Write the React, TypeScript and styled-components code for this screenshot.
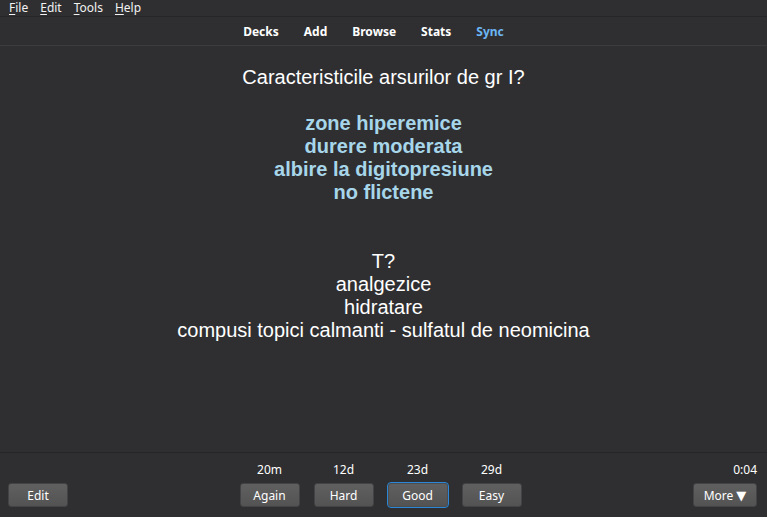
import React from "react";
import styled, { createGlobalStyle } from "styled-components";

const GlobalStyle = createGlobalStyle`
  html, body {
    margin: 0;
    padding: 0;
    background: #2f2f31;
  }
  #root {
    height: 100vh;
  }
`;

const Window = styled.div`
  height: 100%;
  display: flex;
  flex-direction: column;
  background: #2f2f31;
  color: #ffffff;
  font-family: "Noto Sans", "Open Sans", sans-serif;
  overflow: hidden;
`;

const MenuBar = styled.div`
  height: 16px;
  display: flex;
  align-items: center;
  gap: 12px;
  padding-left: 9px;
  font-size: 12px;
  border-bottom: 1px solid #262628;
`;

const MenuItem = styled.span`
  line-height: 16px;
  color: #f2f2f2;
`;

const Mnemonic = styled.span`
  text-decoration: underline;
  text-underline-offset: 2px;
`;

const Toolbar = styled.div`
  height: 28px;
  display: flex;
  align-items: center;
  justify-content: center;
  gap: 25px;
  padding-right: 20px;
  border-bottom: 1px solid #3c3c3e;
`;

const ToolLink = styled.span<{ $active?: boolean }>`
  font-size: 12px;
  font-weight: bold;
  color: ${(p) => (p.$active ? "#6cb6f5" : "#ffffff")};
`;

const Card = styled.div`
  flex: 1;
  padding-top: 20px;
  text-align: center;
  font-family: "Liberation Sans", Arial, sans-serif;
  font-size: 20px;
  line-height: 23px;
  color: #ffffff;
`;

const Answer = styled.div`
  font-weight: bold;
  color: #a7d6ea;
`;

const BottomBar = styled.div`
  display: grid;
  grid-template-columns: 1fr auto 1fr;
  align-items: end;
  padding: 10px 10px 10px 8px;
  border-top: 1px solid #262628;
`;

const Side = styled.div<{ $right?: boolean }>`
  display: flex;
  flex-direction: column;
  align-items: ${(p) => (p.$right ? "flex-end" : "flex-start")};
  gap: 6px;
`;

const Ease = styled.div`
  display: flex;
  margin-left: -4px;
`;

const EaseCol = styled.div`
  width: 74px;
  display: flex;
  flex-direction: column;
  align-items: center;
  gap: 6px;
`;

const Due = styled.span`
  font-size: 12px;
  line-height: 14px;
  color: #ffffff;
`;

const Button = styled.button<{ $focused?: boolean; $wide?: boolean }>`
  width: ${(p) => (p.$wide ? "64px" : "60px")};
  height: 24px;
  padding: 0;
  border: 1px solid ${(p) => (p.$focused ? "#4d4d4f" : "#434345")};
  outline: ${(p) => (p.$focused ? "1px solid #2b88d8" : "none")};
  border-radius: 3px;
  background: linear-gradient(#606060, #535353);
  color: #ffffff;
  font-family: "Noto Sans", "Open Sans", sans-serif;
  font-size: 12px;
`;

const Arrow = styled.span`
  font-family: "DejaVu Sans", sans-serif;
  font-size: 13px;
  margin-left: 3px;
`;

const answers = [
  { label: "Again", due: "20m" },
  { label: "Hard", due: "12d" },
  { label: "Good", due: "23d", focused: true },
  { label: "Easy", due: "29d" },
];

export default function App() {
  return (
    <Window>
      <GlobalStyle />
      <MenuBar>
        <MenuItem><Mnemonic>F</Mnemonic>ile</MenuItem>
        <MenuItem><Mnemonic>E</Mnemonic>dit</MenuItem>
        <MenuItem><Mnemonic>T</Mnemonic>ools</MenuItem>
        <MenuItem><Mnemonic>H</Mnemonic>elp</MenuItem>
      </MenuBar>
      <Toolbar>
        <ToolLink>Decks</ToolLink>
        <ToolLink>Add</ToolLink>
        <ToolLink>Browse</ToolLink>
        <ToolLink>Stats</ToolLink>
        <ToolLink $active>Sync</ToolLink>
      </Toolbar>
      <Card>
        <div>Caracteristicile arsurilor de gr I?</div>
        <br />
        <Answer>
          zone hiperemice
          <br />
          durere moderata
          <br />
          albire la digitopresiune
          <br />
          no flictene
        </Answer>
        <br />
        <br />
        <div>
          T?
          <br />
          analgezice
          <br />
          hidratare
          <br />
          compusi topici calmanti - sulfatul de neomicina
        </div>
      </Card>
      <BottomBar>
        <Side>
          <Button>Edit</Button>
        </Side>
        <Ease>
          {answers.map((a) => (
            <EaseCol key={a.label}>
              <Due>{a.due}</Due>
              <Button $focused={a.focused}>{a.label}</Button>
            </EaseCol>
          ))}
        </Ease>
        <Side $right>
          <Due>0:04</Due>
          <Button $wide>
            More<Arrow>▼</Arrow>
          </Button>
        </Side>
      </BottomBar>
    </Window>
  );
}
